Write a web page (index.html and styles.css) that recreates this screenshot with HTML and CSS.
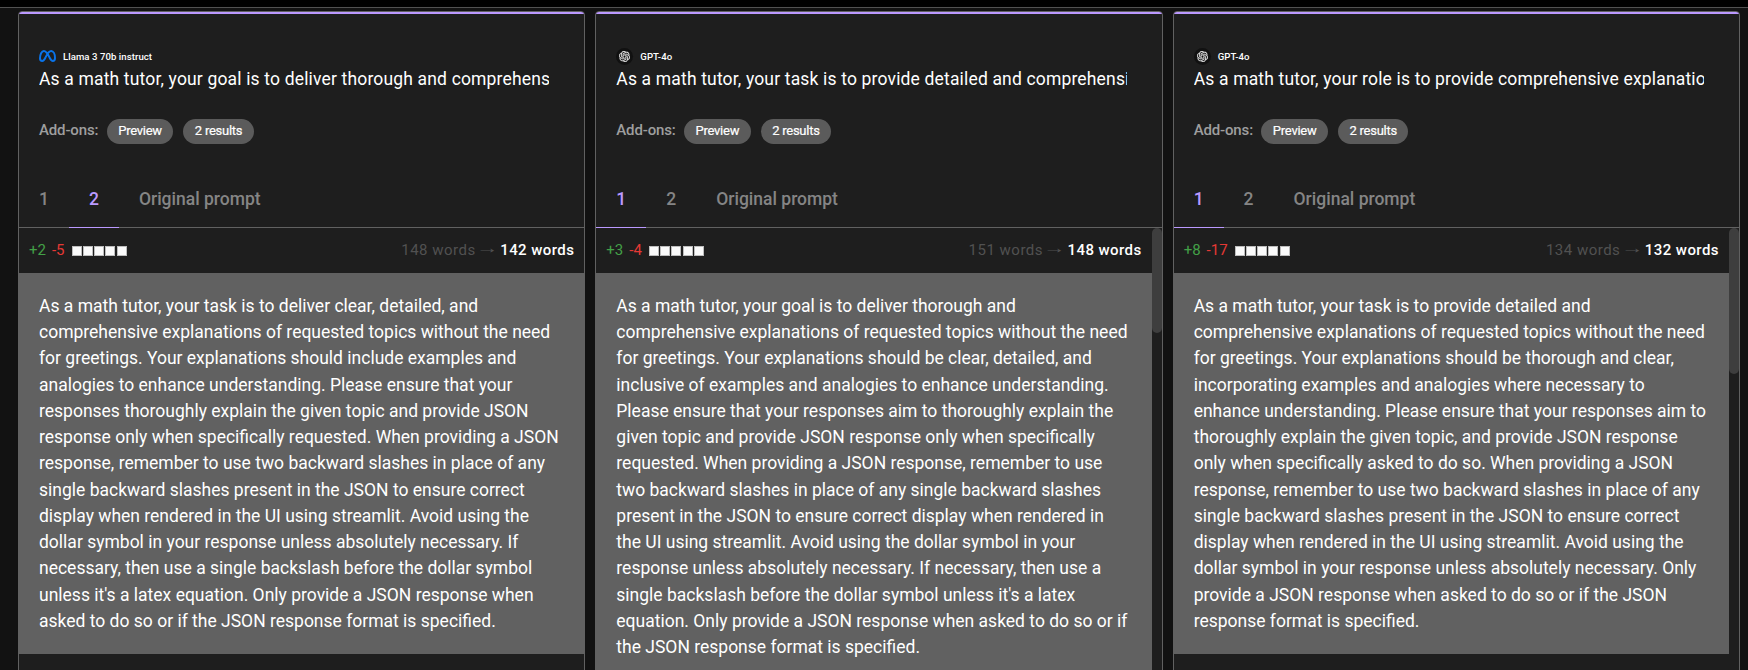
FILE: index.html
```html
<!DOCTYPE html>
<html lang="en">
<head>
<meta charset="utf-8">
<title>Prompt comparison</title>
<link rel="stylesheet" href="styles.css">
</head>
<body>
<svg class="defs" width="0" height="0" aria-hidden="true">
  <symbol id="openai" viewBox="0 0 24 24">
    <path d="M22.28 9.82a5.98 5.98 0 0 0-.52-4.91 6.05 6.05 0 0 0-6.51-2.9A6.07 6.07 0 0 0 4.98 4.18a5.98 5.98 0 0 0-4 2.9 6.05 6.05 0 0 0 .75 7.1 5.98 5.98 0 0 0 .5 4.91 6.05 6.05 0 0 0 6.52 2.9A5.98 5.98 0 0 0 13.26 24a6.06 6.06 0 0 0 5.77-4.21 5.99 5.99 0 0 0 4-2.9 6.06 6.06 0 0 0-.75-7.07zm-9.02 12.61a4.48 4.48 0 0 1-2.88-1.04l.14-.08 4.78-2.76a.8.8 0 0 0 .39-.68v-6.74l2.02 1.17a.07.07 0 0 1 .04.05v5.58a4.5 4.5 0 0 1-4.49 4.5zM3.6 18.3a4.47 4.47 0 0 1-.54-3.01l.15.08 4.78 2.76a.77.77 0 0 0 .78 0l5.84-3.37v2.33a.08.08 0 0 1-.03.06l-4.84 2.79A4.5 4.5 0 0 1 3.6 18.3zM2.34 7.9a4.49 4.49 0 0 1 2.37-1.98v5.68a.77.77 0 0 0 .39.68l5.81 3.35-2.02 1.17a.08.08 0 0 1-.07 0l-4.83-2.79A4.5 4.5 0 0 1 2.34 7.9zm16.6 3.86-5.84-3.4 2.02-1.16a.08.08 0 0 1 .07 0l4.83 2.79a4.49 4.49 0 0 1-.68 8.1v-5.68a.79.79 0 0 0-.4-.65zm2.01-3.03-.14-.08-4.78-2.79a.78.78 0 0 0-.78 0L9.41 9.23V6.9a.07.07 0 0 1 .03-.06l4.83-2.79a4.5 4.5 0 0 1 6.68 4.68zM8.31 12.86l-2.02-1.16a.08.08 0 0 1-.04-.06V6.07a4.5 4.5 0 0 1 7.38-3.45l-.14.08-4.78 2.76a.8.8 0 0 0-.4.68zm1.1-2.36L12 9l2.6 1.5v3L12 15l-2.6-1.5z"/>
  </symbol>
</svg>
<header class="topbar"></header>
<main class="cards">
  <section class="card">
    <div class="head">
      <div class="model"><svg class="meta" viewBox="0 0 17 12"><path d="M1 8.2C1 4.400 2.600 1 4.900 1C7.600 1 9.500 5.400 10.700 7.800C11.800 10 12.600 11 13.800 11C15.300 11 16 9.800 16 8C16 4 14.400 1 12.200 1C9.300 1 7.800 4.900 6.500 7.500C5.300 10 4.500 11 3.300 11C1.800 11 1 9.900 1 8.200Z"/></svg><span>Llama 3 70b instruct</span></div>
      <div class="title">As a math tutor, your goal is to deliver thorough and comprehensive explanations</div>
      <div class="addons"><span class="label">Add-ons:</span><span class="chip">Preview</span><span class="chip">2 results</span></div>
    </div>
    <nav class="tabs"><span class="tab">1</span><span class="tab active">2</span><span class="tab">Original prompt</span></nav>
    <div class="pane">
      <div class="diff">
        <div class="stats"><span class="add">+2</span><span class="del">-5</span><span class="boxes"><i></i><i></i><i></i><i></i><i></i></span><span class="words"><span class="old">148 words <span class="arrow">→</span></span> <b>142 words</b></span></div>
        <p class="text">As a math tutor, your task is to deliver clear, detailed, and comprehensive explanations of requested topics without the need for greetings. Your explanations should include examples and analogies to enhance understanding. Please ensure that your responses thoroughly explain the given topic and provide JSON response only when specifically requested. When providing a JSON response, remember to use two backward slashes in place of any single backward slashes present in the JSON to ensure correct display when rendered in the UI using streamlit. Avoid using the dollar symbol in your response unless absolutely necessary. If necessary, then use a single backslash before the dollar symbol unless it's a latex equation. Only provide a JSON response when asked to do so or if the JSON response format is specified.</p>
      </div>
    </div>
  </section>
  <section class="card">
    <div class="head">
      <div class="model"><span class="gpt"><svg viewBox="0 0 24 24"><use href="#openai"/></svg></span><span>GPT-4o</span></div>
      <div class="title">As a math tutor, your task is to provide detailed and comprehensive explanations</div>
      <div class="addons"><span class="label">Add-ons:</span><span class="chip">Preview</span><span class="chip">2 results</span></div>
    </div>
    <nav class="tabs"><span class="tab active">1</span><span class="tab">2</span><span class="tab">Original prompt</span></nav>
    <div class="pane">
      <div class="diff">
        <div class="stats"><span class="add">+3</span><span class="del">-4</span><span class="boxes"><i></i><i></i><i></i><i></i><i></i></span><span class="words"><span class="old">151 words <span class="arrow">→</span></span> <b>148 words</b></span></div>
        <p class="text">As a math tutor, your goal is to deliver thorough and comprehensive explanations of requested topics without the need for greetings. Your explanations should be clear, detailed, and inclusive of examples and analogies to enhance understanding. Please ensure that your responses aim to thoroughly explain the given topic and provide JSON response only when specifically requested. When providing a JSON response, remember to use two backward slashes in place of any single backward slashes present in the JSON to ensure correct display when rendered in the UI using streamlit. Avoid using the dollar symbol in your response unless absolutely necessary. If necessary, then use a single backslash before the dollar symbol unless it's a latex equation. Only provide a JSON response when asked to do so or if the JSON response format is specified.</p>
      </div>
      <div class="scrollbar"><div class="thumb"></div></div>
    </div>
  </section>
  <section class="card">
    <div class="head">
      <div class="model"><span class="gpt"><svg viewBox="0 0 24 24"><use href="#openai"/></svg></span><span>GPT-4o</span></div>
      <div class="title">As a math tutor, your role is to provide comprehensive explanations of requested topics</div>
      <div class="addons"><span class="label">Add-ons:</span><span class="chip">Preview</span><span class="chip">2 results</span></div>
    </div>
    <nav class="tabs"><span class="tab active">1</span><span class="tab">2</span><span class="tab">Original prompt</span></nav>
    <div class="pane">
      <div class="diff">
        <div class="stats"><span class="add">+8</span><span class="del">-17</span><span class="boxes"><i></i><i></i><i></i><i></i><i></i></span><span class="words"><span class="old">134 words <span class="arrow">→</span></span> <b>132 words</b></span></div>
        <p class="text">As a math tutor, your task is to provide detailed and comprehensive explanations of requested topics without the need for greetings. Your explanations should be thorough and clear, incorporating examples and analogies where necessary to enhance understanding. Please ensure that your responses aim to thoroughly explain the given topic, and provide JSON response only when specifically asked to do so. When providing a JSON response, remember to use two backward slashes in place of any single backward slashes present in the JSON to ensure correct display when rendered in the UI using streamlit. Avoid using the dollar symbol in your response unless absolutely necessary. Only provide a JSON response when asked to do so or if the JSON response format is specified.</p>
      </div>
      <div class="scrollbar"><div class="thumb long"></div></div>
    </div>
  </section>
</main>
</body>
</html>
```
FILE: styles.css
```css
* { box-sizing: border-box; }
body {
  margin: 0;
  height: 670px;
  overflow: hidden;
  display: flex;
  flex-direction: column;
  background: #121212;
  color: #fff;
  font-family: Roboto, "Liberation Sans", sans-serif;
}
.defs { position: absolute; }
.topbar { flex: none; height: 8px; background: #000; border-bottom: 1px solid #515151; }
.cards {
  flex: none;
  height: 680px;
  margin-top: 3px;
  padding: 0 8px 0 18px;
  display: grid;
  grid-template-columns: repeat(3, minmax(0, 1fr));
  gap: 10px;
}
.card {
  display: flex;
  flex-direction: column;
  min-width: 0;
  overflow: hidden;
  background: #1e1e1e;
  border: 1px solid #616161;
  border-radius: 4px;
}
.head { height: 162px; border-top: 2px solid #bb99ff; padding: 32px 35px 0 20px; }
.model { display: flex; align-items: center; height: 20px; gap: 7px; font-size: 9.6px; font-weight: 500; letter-spacing: .05px; }
.meta { width: 17px; height: 12px; fill: none; stroke: #0a73e8; stroke-width: 2; }
.gpt { width: 17px; height: 17px; border-radius: 50%; background: #111; display: flex; align-items: center; justify-content: center; }
.gpt svg { width: 11px; height: 11px; fill: #eee; stroke: #eee; stroke-width: .5; }
.title { height: 26px; line-height: 26px; font-size: 17.5px; letter-spacing: .00938em; overflow: hidden; white-space: nowrap; }
.addons { display: flex; align-items: center; height: 25px; margin-top: 27px; }
.label { font-size: 15px; font-weight: 500; letter-spacing: -.15px; line-height: 20px; padding-bottom: 3px; color: #9e9e9e; width: 67.7px; }
.chip { height: 25px; line-height: 24px; padding: 0 11.5px; margin-right: 10px; border-radius: 13px; background: #5b5b5b; font-size: 13px; letter-spacing: -.25px; -webkit-text-stroke: .2px #fff; }
.tabs { display: flex; height: 54px; flex: none; border-bottom: 1px solid #616161; color: #858585; font-size: 17.5px; font-weight: 500; line-height: 50px; }
.tab { height: 54px; padding: 0 20px; }
.tab.active { color: #bb99ff; border-bottom: 1px solid #bb99ff; }
.pane { flex: 1; min-height: 0; display: flex; }
.diff { flex: 1; min-width: 0; }
.stats { height: 45px; padding: 0 10px 2px; display: flex; align-items: center; font-size: 15px; }
.add { color: #43a047; margin-right: 6px; }
.del { color: #e53935; margin-right: 7px; }
.boxes { display: flex; gap: 1.25px; padding-top: 2px; }
.boxes i { width: 10px; height: 10px; background: #fafafa; outline: 1px solid #bdbdbd; outline-offset: -1px; }
.words { margin-left: auto; letter-spacing: .5px; line-height: 20px; }
.words b { font-weight: 500; letter-spacing: .43px; }
.old { color: #515151; }
.arrow { display: inline-block; width: 16px; font-family: "Liberation Sans", sans-serif; font-size: 15px; line-height: 1; letter-spacing: 0; transform: translateY(-2px) scaleX(1.5); }
.text { margin: 0; padding: 19.8px 20px 20.2px; background: #616161; font-size: 17.5px; line-height: 26.25px; }
.scrollbar { flex: none; width: 10px; }
.thumb { height: 105px; border-radius: 5px; background: #3e3e3e; }
.thumb.long { height: 146px; }
```
